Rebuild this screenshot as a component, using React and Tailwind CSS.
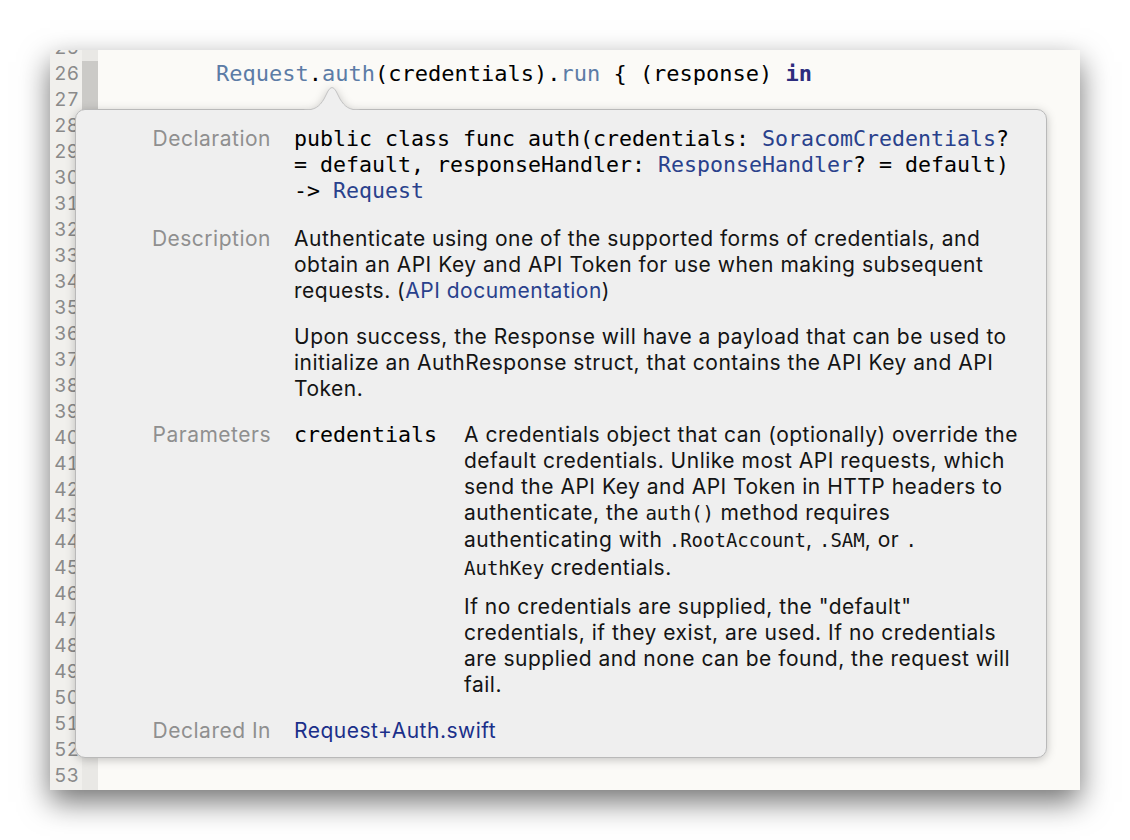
import React from "react";

const lineNumbers = Array.from({ length: 29 }, (_, i) => 25 + i);

const mono = "font-['DejaVu_Sans_Mono','Liberation_Mono',monospace]";
const sans = "font-['Inter','Noto_Sans',sans-serif]";

function Code({ children }) {
  return <span className={`${mono} text-[19px] leading-none tracking-normal`}>{children}</span>;
}

function Label({ children }) {
  return <div className="text-right text-[#8f8f8f] leading-[26px]">{children}</div>;
}

export default function App() {
  return (
    <div className="w-[1130px] h-[840px] bg-white pt-[50px] pl-[50px]">
      <div className="relative w-[1030px] h-[740px] bg-[#fbfaf7] shadow-[0_12px_28px_rgba(0,0,0,0.55)] flex">
        {/* gutter */}
        <div className="w-[32px] h-full overflow-hidden bg-[#f1f0ed]">
          <div className={`-mt-[15px] ${sans} text-[19px] tabular-nums text-[#8a8a8a] text-right pr-[3px]`}>
            {lineNumbers.map((n) => (
              <div key={n} className="h-[26px] leading-[26px]">
                {n}
              </div>
            ))}
          </div>
        </div>
        <div className="w-[16px] h-full overflow-hidden bg-[#e9e8e5]">
          <div className="mt-[11px] h-[676px] bg-[#cbcac7]" />
        </div>

        {/* editor */}
        <div className="flex-1 h-full overflow-hidden">
          <div className={`mt-[11px] pl-[118px] ${mono} text-[22px] text-black`}>
            <div className="h-[26px] leading-[26px] whitespace-pre">
              <span className="text-[#5c7ca6]">Request</span>.
              <span className="text-[#5c7ca6]">auth</span>(credentials).
              <span className="text-[#5c7ca6]">run</span>
              {" { (response) "}
              <span className="font-bold text-[#2d2d7e]">in</span>
            </div>
          </div>
        </div>

        {/* quick help popover */}
        <div className="absolute left-[25px] top-[59px] w-[972px] drop-shadow-[0_2px_5px_rgba(0,0,0,0.22)]">
          <svg
            className="absolute left-[229px] -top-[24px]"
            width="56"
            height="26"
            viewBox="0 0 56 26"
          >
            <path
              d="M0 25 C11 25 15 22 20 14 L24 6 Q28 -1 32 6 L36 14 C41 22 45 25 56 25"
              fill="#efefef"
              stroke="#c2c2c2"
              strokeWidth="1"
            />
            <rect x="0" y="25" width="56" height="1" fill="#efefef" />
          </svg>
          <div
            className={`bg-[#efefef] border border-[#b9b9b9] rounded-[10px] pt-[16px] pb-[13px] pr-[23px] ${sans} text-[21px] tracking-[0.5px] text-[#141414] grid grid-cols-[195px_1fr] gap-x-[23px]`}
          >
            <Label>Declaration</Label>
            <div className={`${mono} text-[21.6px] tracking-normal leading-[26px] whitespace-pre text-black`}>
              <div>
                public class func auth(credentials: <span className="text-[#29418c]">SoracomCredentials</span>?
              </div>
              <div>
                = default, responseHandler: <span className="text-[#29418c]">ResponseHandler</span>? = default)
              </div>
              <div>
                -&gt; <span className="text-[#29418c]">Request</span>
              </div>
            </div>

            <div className="col-span-2 h-[22px]" />
            <Label>Description</Label>
            <div className="leading-[26px] whitespace-nowrap">
              <p>
                Authenticate using one of the supported forms of credentials, and
                <br />
                obtain an API Key and API Token for use when making subsequent
                <br />
                requests. (<span className="text-[#29418c]">API documentation</span>)
              </p>
              <p className="mt-[20px]">
                Upon success, the Response will have a payload that can be used to
                <br />
                initialize an AuthResponse struct, that contains the API Key and API
                <br />
                Token.
              </p>
            </div>

            <div className="col-span-2 h-[20px]" />
            <Label>Parameters</Label>
            <div className="grid grid-cols-[170px_1fr]">
              <div className={`${mono} text-[21.6px] tracking-normal leading-[26px] text-black`}>credentials</div>
              <div className="whitespace-nowrap">
                <div className="leading-[26px]">
                  <div>A credentials object that can (optionally) override the</div>
                  <div>default credentials. Unlike most API requests, which</div>
                  <div>send the API Key and API Token in HTTP headers to</div>
                  <div>
                    authenticate, the <Code>auth()</Code> method requires
                  </div>
                </div>
                <div className="leading-[28px]">
                  <div>
                    authenticating with <Code>.RootAccount</Code>, <Code>.SAM</Code>, or <Code>.</Code>
                  </div>
                  <div>
                    <Code>AuthKey</Code> credentials.
                  </div>
                </div>
                <div className="leading-[26px] mt-[12px]">
                  <div>If no credentials are supplied, the "default"</div>
                  <div>credentials, if they exist, are used. If no credentials</div>
                  <div>are supplied and none can be found, the request will</div>
                  <div>fail.</div>
                </div>
              </div>
            </div>

            <div className="col-span-2 h-[20px]" />
            <Label>Declared In</Label>
            <div className="leading-[26px] text-[#1b2f8a]">Request+Auth.swift</div>
          </div>
        </div>
      </div>
    </div>
  );
}
